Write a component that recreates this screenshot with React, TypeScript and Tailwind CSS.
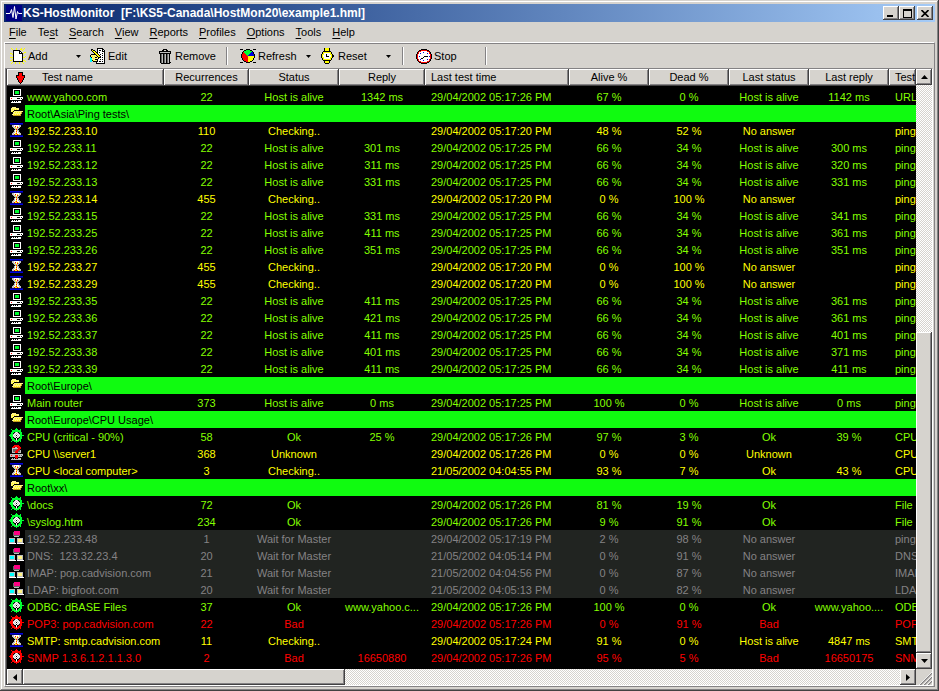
import { Fragment } from "react"
import type { ReactNode } from "react"
import clsx from "clsx"

const COLORS: Record<string, string> = {
  K: "#000000",
  W: "#ffffff",
  S: "#bdbebd",
  D: "#636563",
  R: "#ff0000",
  r: "#a50000",
  G: "#00ff31",
  Y: "#ffff00",
  y: "#fff384",
  B: "#0000de",
  b: "#000084",
  C: "#00ffff",
  M: "#ff0084",
  O: "#c6a221",
}

const COMPUTER = [
  "................",
  ".....WWWWWWWW...",
  ".....WKKKKKKW...",
  ".....WKGGGGKW...",
  ".....WKGGGGKW...",
  ".....WKGGGGKW...",
  ".....WKKKKKKW...",
  ".....WWWWWWWW...",
  "................",
  "..WWWWWWWWWWWWW.",
  "..WRWWWWWKKKWKW.",
  "..WWWWWWWWWWWW..",
  "................",
  "....W.W.W.WWW...",
  "...WWWWWWWWWW...",
]

const FOLDER = [
  "................",
  "................",
  "....yyyy........",
  "...yyyyyyyy.....",
  "...yYyYyYyy.....",
  "...yyyKKKKKKK...",
  "...yYKyyyyyyyyy.",
  "....KyyYyYyYyO..",
  "....KyyyyyyyyO..",
  "....yyYyYyYyO...",
  ".....OOOOOOOO...",
]

const HOURGLASS = [
  "................",
  "..BBBBBBBBBBBBB.",
  "..bbbbbbbbbbbbb.",
  "....SSWWWWWSS...",
  "....SSWRWYWSS...",
  ".....SSYWRSS....",
  "......SSYSS.....",
  ".......SRS......",
  "......SWYSS.....",
  "......SWRWS.....",
  ".....SSWYWSS....",
  "....SSWYRWWSS...",
  "....SSRYYRYSS...",
  "..bbbbbbbbbbbbb.",
  "..BBBBBBBBBBBBB.",
]

const GEAR = [
  "........G.......",
  "...G...GGG..G...",
  "....GGGGGGGGG...",
  "....GGGGGGGGG...",
  "...GGGKSWSKGGG..",
  "...GGKSWSWSKGG..",
  "..GGGSWSWSWSGG..",
  ".GGGGWSWKWSWGGGG",
  "..GGGSWSWSWSGG..",
  "...GGKSWKWSKGG..",
  "...GGGKKWKKGGG..",
  "....GGGKWKGGG...",
  "....GGGGSGGGG...",
  "...G..GGGGG.G...",
  "........G.......",
]

const UNKNOWN = [
  "......RRRRR.....",
  ".....RRRRRRR....",
  "....RRrSSrRRR...",
  "....SSSSSSRRR...",
  "....SDDDDRRR....",
  "....SDDDRRRDS...",
  "....SDDRRRDDS...",
  "....SSSRRRSSS...",
  "................",
  "..SSSSSSSSSSSSS.",
  "..SRSSSRRRSDSDS.",
  "..SSSSSRRRSSSS..",
  ".......RRR......",
  "....S.S.R.SSS...",
  "...SSSSSSSSSS...",
]

const NETWORK = [
  "................",
  "......MMMMMM....",
  ".....DMMMMMM....",
  ".....DMMMMMM....",
  ".....DMMMMMM....",
  ".....DDDDDDD....",
  "......SSSSS.....",
  "................",
  ".SSSSSS..SSSSSS.",
  ".SCCCCS..SyyyyS.",
  ".SCCCCS..SyyyyS.",
  ".SCCCCS..SyyyyS.",
  ".SSSSSS..SSSSSS.",
  ".WWWWWWW.WWWWWWW",
]

const ADD = [
  ".Y....Y....Y..Y.",
  "..Y...Y...YY.Y..",
  "...KKKKKKK..Y...",
  "...KWWWWWKK.....",
  "...KWWWWWKWK..YY",
  "YY.KWWWWWKKKKY..",
  "..YKWWWWWWWWK...",
  "...KWWWWWWWWK...",
  "...KWWWWWWWWK..Y",
  "YYYKWWWWWWWWKYY.",
  "...KWWWWWWWWK...",
  "..YKWWWWWWWWK...",
  "YY.KWWWWWWWWKYY.",
  "...KKKKKKKKKK..Y",
  "..Y..Y...Y..Y...",
  ".Y...Y...Y...Y..",
]

const EDIT = [
  ".......KKKKKK...",
  ".KK....KWWWWKK..",
  ".KYKK..KWKKWKWK.",
  "..KYYK.KWWWWKKK.",
  "...KYYKKWKWWWWK.",
  "....KYYKWWWWKWK.",
  ".KKKKKYYKWKWWWK.",
  "KyyyyyKYYKWWKWK.",
  "KyYyYyyKYYKWWWK.",
  "CKyyyKKyKKKWKWK.",
  "CCyYyyyyKWWWWWK.",
  "CCyyyKKKWWKWKWK.",
  "CCKYyyyKWWWWWWK.",
  "CC.KKKKKWKKWKWK.",
  "......KWWWWWWWK.",
  "......KKKKKKKKK.",
]

const TRASH = [
  "......KKKK......",
  ".....KK..KK.....",
  "..KKKKKKKKKKKK..",
  "..KSSSSSSSSSSK..",
  "..KKKKKKKKKKKK..",
  "...KDSKDSKDSK...",
  "...KDSKDSKDSK...",
  "...KDSKDSKDSK...",
  "...KDSKDSKDSK...",
  "...KDSKDSKDSK...",
  "...KDSKDSKDSK...",
  "...KDSKDSKDSK...",
  "...KDSKDSKDSK...",
  "...KDSKDSKDSKK..",
  "....KKKKKKKKK...",
]

const WATCH = [
  "....KYYYYK......",
  "....KYYYYK......",
  "....KYYYYK......",
  "...KKKKKKKK.....",
  "..KYYYYYYYYK....",
  "..KYWWWWWWYK....",
  ".KYYWWKWWWYYK...",
  ".KYWWWKWWWWYKK..",
  ".KYWWWKKKWWYKK..",
  ".KYYWWWWWWYYK...",
  "..KYWWWWWWYK....",
  "..KYYYYYYYYK....",
  "...KKKKKKKK.....",
  "....KYYYYK......",
  "....KYYYYK......",
  ".....KKKK.......",
]

const REFRESH = [
  "KKK...KKKK...KKK",
  "....KKGGGGKK....",
  "...KGGGGGGGGK...",
  "..KRGGGGGGGBBK..",
  "..KRRGGGGGBBBK..",
  ".KRRRRGGGBBBBBK.",
  ".KRRRRRGBBBBBBK.",
  ".KRRRRRRYYYYYYK.",
  ".KRRRRRRYYYYYYK.",
  "..KRRRRRYYYYYK..",
  "..KRRRRRYYYYYK..",
  "...KRRRRYYYYK...",
  "....KKRRYYKK....",
  "KKK...KKKK...KKK",
]

const CLOCK = [
  ".....KKKKKK.....",
  "...KKRRRRRRKK...",
  "..KRRWWWWWWRRK..",
  ".KRWWWWBWWWWWRK.",
  ".KRWBWWWWWWBWRK.",
  "KRWWWWWWWWWWWWRK",
  "KRWWWWWWWWWWWWRK",
  "KRWBWWWWKKKKWBRK",
  "KRWWWWWKWWWWWWRK",
  "KRWWWKKWWWWWWWRK",
  ".KRWBWWWWWWBWRK.",
  ".KRWWWWBWWWWWRK.",
  "..KRRWWWWWWRRK..",
  "...KKRRRRRRKK...",
  ".....KKKKKK.....",
]

const SORT_ARROW = [
  "...KKKKK...",
  "...KRRRK...",
  "...KRRRK...",
  ".KKKRRRKKK.",
  ".KRRRRRRRK.",
  ".KRRRRRRRK.",
  "..KRRRRRK..",
  "..KRRRRRK..",
  "...KRRRK...",
  "...KRRRK...",
  "....KRK....",
  ".....K.....",
]

function PixelIcon({ grid, swap }: { grid: string[]; swap?: Record<string, string> }) {
  const w = grid[0].length
  const h = grid.length
  return (
    <svg width={w} height={h} viewBox={`0 0 ${w} ${h}`} shapeRendering="crispEdges" className="block shrink-0" aria-hidden="true">
      {grid.map((line, y) =>
        line.split("").map((c, x) => {
          if (c === ".") return null
          return <rect key={`${x}-${y}`} x={x} y={y} width="1" height="1" fill={COLORS[swap?.[c] ?? c]} />
        })
      )}
    </svg>
  )
}

type Kind = "alive" | "checking" | "ok" | "bad" | "unknown" | "wait"

type Test = {
  kind: Kind
  cells: string[]
}

type Entry = { folder: string } | Test

const t = (kind: Kind, ...cells: string[]): Test => ({ kind, cells })

const alive = (ip: string, reply: string, last: string) =>
  t("alive", ip, "22", "Host is alive", reply, "29/04/2002 05:17:25 PM", "66 %", "34 %", "Host is alive", last, "ping")

const checking = (ip: string, count: string, up: string, down: string) =>
  t("checking", ip, count, "Checking..", "", "29/04/2002 05:17:20 PM", up, down, "No answer", "", "ping")

const entries: Entry[] = [
  t("alive", "www.yahoo.com", "22", "Host is alive", "1342 ms", "29/04/2002 05:17:26 PM", "67 %", "0 %", "Host is alive", "1142 ms", "URL"),
  { folder: "Root\\Asia\\Ping tests\\" },
  checking("192.52.233.10", "110", "48 %", "52 %"),
  alive("192.52.233.11", "301 ms", "300 ms"),
  alive("192.52.233.12", "311 ms", "320 ms"),
  alive("192.52.233.13", "331 ms", "331 ms"),
  checking("192.52.233.14", "455", "0 %", "100 %"),
  alive("192.52.233.15", "331 ms", "341 ms"),
  alive("192.52.233.25", "411 ms", "361 ms"),
  alive("192.52.233.26", "351 ms", "351 ms"),
  checking("192.52.233.27", "455", "0 %", "100 %"),
  checking("192.52.233.29", "455", "0 %", "100 %"),
  alive("192.52.233.35", "411 ms", "361 ms"),
  alive("192.52.233.36", "421 ms", "361 ms"),
  alive("192.52.233.37", "411 ms", "401 ms"),
  alive("192.52.233.38", "401 ms", "371 ms"),
  alive("192.52.233.39", "411 ms", "411 ms"),
  { folder: "Root\\Europe\\" },
  t("alive", "Main router", "373", "Host is alive", "0 ms", "29/04/2002 05:17:25 PM", "100 %", "0 %", "Host is alive", "0 ms", "ping"),
  { folder: "Root\\Europe\\CPU Usage\\" },
  t("ok", "CPU (critical - 90%)", "58", "Ok", "25 %", "29/04/2002 05:17:26 PM", "97 %", "3 %", "Ok", "39 %", "CPU"),
  t("unknown", "CPU \\\\server1", "368", "Unknown", "", "29/04/2002 05:17:26 PM", "0 %", "0 %", "Unknown", "", "CPU"),
  t("checking", "CPU <local computer>", "3", "Checking..", "", "21/05/2002 04:04:55 PM", "93 %", "7 %", "Ok", "43 %", "CPU"),
  { folder: "Root\\xx\\" },
  t("ok", "\\docs", "72", "Ok", "", "29/04/2002 05:17:26 PM", "81 %", "19 %", "Ok", "", "File c"),
  t("ok", "\\syslog.htm", "234", "Ok", "", "29/04/2002 05:17:26 PM", "9 %", "91 %", "Ok", "", "File c"),
  t("wait", "192.52.233.48", "1", "Wait for Master", "", "29/04/2002 05:17:19 PM", "2 %", "98 %", "No answer", "", "ping"),
  t("wait", "DNS:  123.32.23.4", "20", "Wait for Master", "", "21/05/2002 04:05:14 PM", "0 %", "91 %", "No answer", "", "DNS"),
  t("wait", "IMAP: pop.cadvision.com", "21", "Wait for Master", "", "21/05/2002 04:04:56 PM", "0 %", "87 %", "No answer", "", "IMAP"),
  t("wait", "LDAP: bigfoot.com", "20", "Wait for Master", "", "21/05/2002 04:05:13 PM", "0 %", "82 %", "No answer", "", "LDAP"),
  t("ok", "ODBC: dBASE Files", "37", "Ok", "www.yahoo.c...", "29/04/2002 05:17:26 PM", "100 %", "0 %", "Ok", "www.yahoo....", "ODBC"),
  t("bad", "POP3: pop.cadvision.com", "22", "Bad", "", "29/04/2002 05:17:26 PM", "0 %", "91 %", "Bad", "", "POP3"),
  t("checking", "SMTP: smtp.cadvision.com", "11", "Checking..", "", "29/04/2002 05:17:24 PM", "91 %", "0 %", "Host is alive", "4847 ms", "SMTP"),
  t("bad", "SNMP 1.3.6.1.2.1.1.3.0", "2", "Bad", "16650880", "29/04/2002 05:17:26 PM", "95 %", "5 %", "Bad", "16650175", "SNMP"),
]

const rowStyle: Record<Kind, string> = {
  alive: "text-[#84ff00]",
  ok: "text-[#84ff00]",
  checking: "text-[#ffff00]",
  unknown: "text-[#ffff00]",
  bad: "text-[#ff0000]",
  wait: "text-[#848284]",
}

const rowIcon: Record<Kind, ReactNode> = {
  alive: <PixelIcon grid={COMPUTER} />,
  checking: <PixelIcon grid={HOURGLASS} />,
  ok: <PixelIcon grid={GEAR} />,
  bad: <PixelIcon grid={GEAR} swap={{ G: "R" }} />,
  unknown: <PixelIcon grid={UNKNOWN} />,
  wait: <PixelIcon grid={NETWORK} />,
}

const menu = ["File", "Test", "Search", "View", "Reports", "Profiles", "Options", "Tools", "Help"]
// position of the underlined accelerator letter
const accel: Record<string, number> = { Test: 2 }

const headers = ["Recurrences", "Status", "Reply", "Last test time", "Alive %", "Dead %", "Last status", "Last reply", "Test method"]

const leftAligned = [4, 9]

const raised = "bg-[#d6d3ce] shadow-[inset_-1px_-1px_0_#424142,inset_1px_1px_0_#ffffff,inset_-2px_-2px_0_#848284]"
const track = "bg-[conic-gradient(#ffffff_25%,#d6d3ce_0_50%,#ffffff_0_75%,#d6d3ce_0)] bg-[length:2px_2px]"

function Arrow({ points, w, h }: { points: string; w: number; h: number }) {
  return (
    <svg width={w} height={h} viewBox={`0 0 ${w} ${h}`} aria-hidden="true">
      <polygon points={points} />
    </svg>
  )
}

function ScrollButton({ label, children }: { label: string; children: ReactNode }) {
  return (
    <button aria-label={label} className={clsx("flex size-4 shrink-0 items-center justify-center", raised)}>
      {children}
    </button>
  )
}

function ToolButton({ grid, label, className }: { grid: string[]; label: string; className?: string }) {
  return (
    <button className={clsx("flex h-6 items-center gap-0.5", className)}>
      <PixelIcon grid={grid} />
      {label}
    </button>
  )
}

function DropButton({ label }: { label: string }) {
  return (
    <button aria-label={label} className="flex h-6 w-4 items-center justify-center">
      <Arrow points="0,0 5,0 2.5,3" w={5} h={3} />
    </button>
  )
}

function Separator() {
  return <div className="h-[18px] w-0.5 border-r border-l border-r-white border-l-[#848284]" />
}

function TitleBar() {
  return (
    <header className="flex h-[18px] items-center bg-linear-to-r from-[#08246b] to-[#a5cbf7] pr-0.5 pl-0.5">
      <svg width="16" height="16" viewBox="0 0 16 16" className="shrink-0" aria-hidden="true">
        <rect width="16" height="16" fill="#000084" />
        <path d="M0 8.500H4L5.500 4.500L7 12.500L8.500 1.500L10 14L11.500 6.500L12.500 8.500H16" fill="none" stroke="#fff" />
      </svg>
      <h1 className="grow truncate pl-px text-[12px] font-bold whitespace-pre text-white">
        {"KS-HostMonitor  [F:\\KS5-Canada\\HostMon20\\example1.hml]"}
      </h1>
      <button aria-label="Minimize" className={clsx("flex h-3.5 w-4 items-end justify-center pb-[3px]", raised)}>
        <span className="mr-0.5 h-0.5 w-1.5 bg-black" />
      </button>
      <button aria-label="Maximize" className={clsx("flex h-3.5 w-4 items-center justify-center", raised)}>
        <span className="h-[9px] w-[9px] border border-t-2 border-black" />
      </button>
      <button aria-label="Close" className={clsx("ml-0.5 flex h-3.5 w-4 items-center justify-center", raised)}>
        <svg width="8" height="7" viewBox="0 0 8 7" aria-hidden="true">
          <path d="M0.500 0L7.500 7M7.500 0L0.500 7" stroke="#000" strokeWidth="1.600" />
        </svg>
      </button>
    </header>
  )
}

function MenuBar() {
  return (
    <nav className="flex h-5 items-center gap-[11px] pl-[5px]">
      {menu.map((name) => {
        const i = accel[name] ?? 0
        return (
          <button key={name}>
            {name.slice(0, i)}
            <span className="underline underline-offset-2">{name[i]}</span>
            {name.slice(i + 1)}
          </button>
        )
      })}
    </nav>
  )
}

function Toolbar() {
  return (
    <div role="toolbar" className="flex h-6 items-center pl-[5px]">
      <ToolButton grid={ADD} label="Add" className="w-[60px]" />
      <DropButton label="Add options" />
      <ToolButton grid={EDIT} label="Edit" className="ml-1 w-[67px]" />
      <ToolButton grid={TRASH} label="Remove" className="w-[69px]" />
      <Separator />
      <ToolButton grid={REFRESH} label="Refresh" className="ml-3 w-[60px]" />
      <DropButton label="Refresh options" />
      <ToolButton grid={WATCH} label="Reset" className="ml-1 w-[60px]" />
      <DropButton label="Reset options" />
      <div className="w-1.5" />
      <Separator />
      <ToolButton grid={CLOCK} label="Stop" className="ml-3 w-[69px]" />
      <Separator />
    </div>
  )
}

function TestTable() {
  return (
    <table className="w-full table-fixed border-collapse whitespace-pre">
      <colgroup>
        <col className="w-[18px]" />
        <col className="w-[139px]" />
        <col className="w-[85px]" />
        <col className="w-[90px]" />
        <col className="w-[86px]" />
        <col className="w-[144px]" />
        <col className="w-20" />
        <col className="w-20" />
        <col className="w-20" />
        <col className="w-20" />
        <col />
      </colgroup>
      <thead>
        <tr className="h-[17px]">
          <th colSpan={2} className="p-0 font-normal">
            <button className={clsx("flex h-[17px] w-full items-center gap-4 pl-2", raised)}>
              <PixelIcon grid={SORT_ARROW} />
              Test name
            </button>
          </th>
          {headers.map((name, i) => (
            <th key={name} className="overflow-hidden p-0 font-normal">
              <button
                className={clsx("block h-[17px] w-full overflow-hidden leading-[17px]", raised, leftAligned.includes(i + 1) ? "pl-1.5 text-left" : "text-center")}
              >
                {name}
              </button>
            </th>
          ))}
        </tr>
      </thead>
      <tbody className="leading-[15px]">
        <tr className="h-0.5">
          <td colSpan={11} className="p-0" />
        </tr>
        {entries.map((entry, n) => (
          <Fragment key={n}>
            {"folder" in entry ? (
              <tr className="h-[17px]">
                <td className="p-0 pl-px align-top">
                  <PixelIcon grid={FOLDER} />
                </td>
                <td colSpan={10} className="bg-[#10fb10] p-0 pt-0.5 pl-0.5 text-black">
                  {entry.folder}
                </td>
              </tr>
            ) : (
              <tr className={clsx("h-[17px]", rowStyle[entry.kind])}>
                <td className="p-0 pl-px align-top">{rowIcon[entry.kind]}</td>
                {entry.cells.map((cell, i) => (
                  <td
                    key={i}
                    className={clsx(
                      "overflow-hidden p-0 pt-0.5",
                      entry.kind === "wait" && "bg-[#212421]",
                      i === 0 ? "pl-0.5" : leftAligned.includes(i) ? "pl-1.5" : "text-center"
                    )}
                  >
                    {cell}
                  </td>
                ))}
              </tr>
            )}
          </Fragment>
        ))}
      </tbody>
    </table>
  )
}

export default function App() {
  return (
    <div className="flex min-h-screen flex-col bg-[#d6d3ce] p-1 font-['Liberation_Sans',Arial,sans-serif] text-[11px] leading-[17px] text-black shadow-[inset_-1px_-1px_0_#424142,inset_1px_1px_0_#d6d3ce,inset_-2px_-2px_0_#848284,inset_2px_2px_0_#ffffff]">
      <TitleBar />
      <MenuBar />

      <main className="flex grow flex-col border border-t-white border-r-[#848284] border-b-[#848284] border-l-white">
        <div className="border-t border-[#848284]">
          <Toolbar />
        </div>

        {/* Test list with both scroll bars */}
        <div className="mr-px flex grow flex-col border border-t-[#848284] border-r-white border-b-white border-l-[#848284]">
          <div className="flex grow border-l border-[#424142]">
            <div className="min-w-0 grow overflow-hidden bg-black pb-0.5">
              <TestTable />
            </div>
            <div className={clsx("flex w-4 shrink-0 flex-col", track)}>
              <ScrollButton label="Scroll up">
                <Arrow points="0,4 7,4 3.5,0" w={7} h={4} />
              </ScrollButton>
              <div className="grow-[246] basis-0" />
              <div className={clsx("grow-[320] basis-0", raised)} />
              <ScrollButton label="Scroll down">
                <Arrow points="0,0 7,0 3.5,4" w={7} h={4} />
              </ScrollButton>
            </div>
          </div>
          <div className="flex h-4 border-l border-[#424142]">
            <div className={clsx("flex grow", track)}>
              <ScrollButton label="Scroll left">
                <Arrow points="4,0 4,7 0,3.5" w={4} h={7} />
              </ScrollButton>
              <div className={clsx("grow-[322] basis-0", raised)} />
              <div className="grow-[555] basis-0" />
              <ScrollButton label="Scroll right">
                <Arrow points="0,0 0,7 4,3.5" w={4} h={7} />
              </ScrollButton>
            </div>
            <svg width="16" height="16" viewBox="0 0 16 16" className="shrink-0" aria-hidden="true">
              <path d="M4 16L16 4M8 16L16 8M12 16L16 12" stroke="#848284" strokeWidth="1.500" />
              <path d="M3 16L16 3M7 16L16 7M11 16L16 11" stroke="#fff" strokeWidth="0.800" />
            </svg>
          </div>
        </div>
      </main>
    </div>
  )
}
